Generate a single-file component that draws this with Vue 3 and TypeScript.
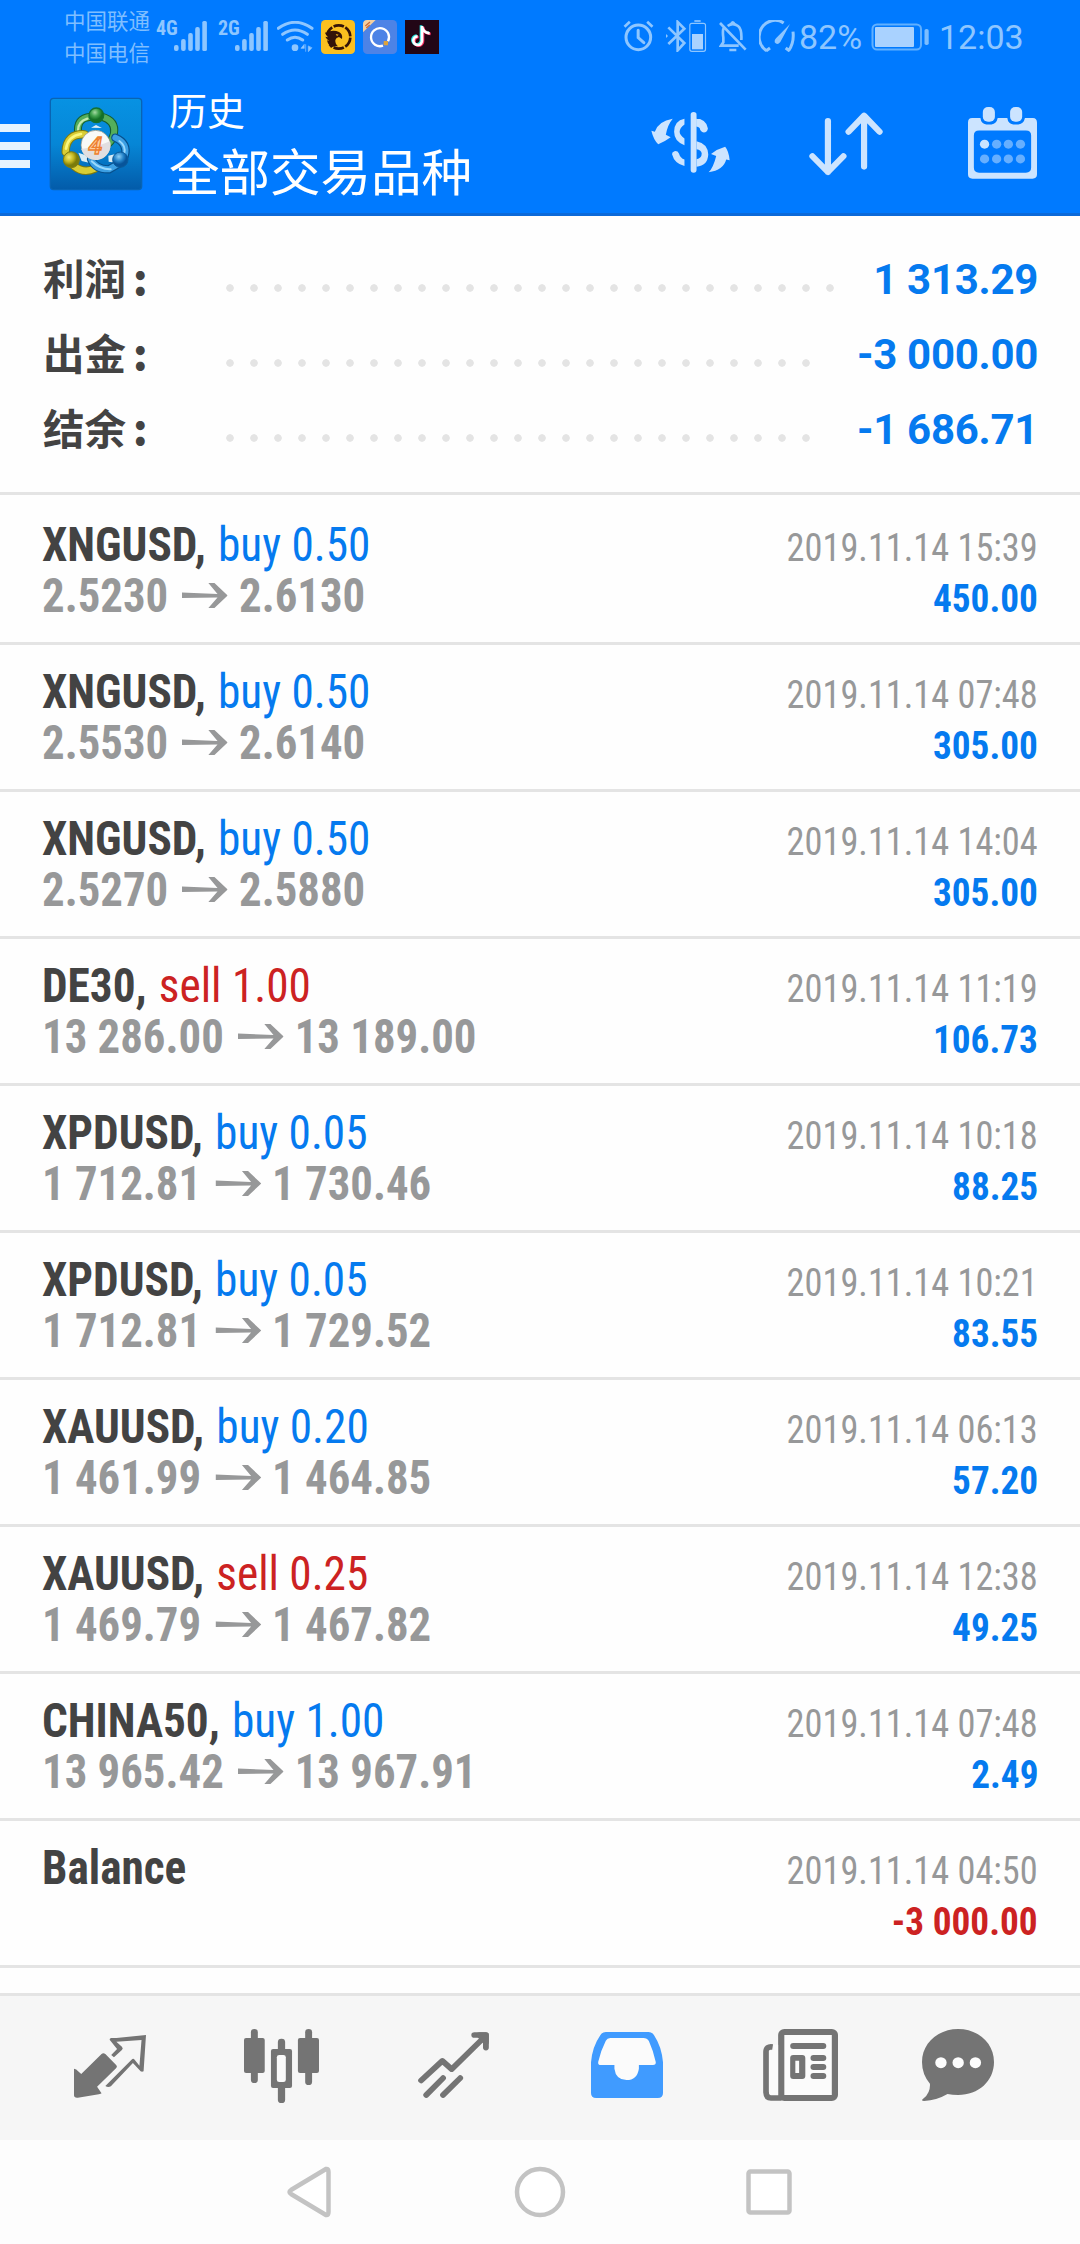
<script setup lang="ts">
interface Deal {
  symbol: string
  side?: 'buy' | 'sell'
  volume?: string
  open?: string
  close?: string
  time: string
  profit: string
}

interface SummaryRow {
  label: string
  dots: number
  value: string
}

const summary: SummaryRow[] = [
  { label: '利润', dots: 26, value: '1 313.29' },
  { label: '出金', dots: 25, value: '-3 000.00' },
  { label: '结余', dots: 25, value: '-1 686.71' },
]

const deals: Deal[] = [
  { symbol: 'XNGUSD', side: 'buy', volume: '0.50', open: '2.5230', close: '2.6130', time: '2019.11.14 15:39', profit: '450.00' },
  { symbol: 'XNGUSD', side: 'buy', volume: '0.50', open: '2.5530', close: '2.6140', time: '2019.11.14 07:48', profit: '305.00' },
  { symbol: 'XNGUSD', side: 'buy', volume: '0.50', open: '2.5270', close: '2.5880', time: '2019.11.14 14:04', profit: '305.00' },
  { symbol: 'DE30', side: 'sell', volume: '1.00', open: '13 286.00', close: '13 189.00', time: '2019.11.14 11:19', profit: '106.73' },
  { symbol: 'XPDUSD', side: 'buy', volume: '0.05', open: '1 712.81', close: '1 730.46', time: '2019.11.14 10:18', profit: '88.25' },
  { symbol: 'XPDUSD', side: 'buy', volume: '0.05', open: '1 712.81', close: '1 729.52', time: '2019.11.14 10:21', profit: '83.55' },
  { symbol: 'XAUUSD', side: 'buy', volume: '0.20', open: '1 461.99', close: '1 464.85', time: '2019.11.14 06:13', profit: '57.20' },
  { symbol: 'XAUUSD', side: 'sell', volume: '0.25', open: '1 469.79', close: '1 467.82', time: '2019.11.14 12:38', profit: '49.25' },
  { symbol: 'CHINA50', side: 'buy', volume: '1.00', open: '13 965.42', close: '13 967.91', time: '2019.11.14 07:48', profit: '2.49' },
  { symbol: 'Balance', time: '2019.11.14 04:50', profit: '-3 000.00' },
]
</script>

<template>
  <div class="screen">
    <header class="top">
      <div class="status">
        <div class="carriers"><span>中国联通</span><span>中国电信</span></div>
        <span class="net n4">4G</span>
        <svg class="bars b1" width="33" height="30" viewBox="0 0 33 30" fill="#8ec6ff">
          <rect x="0" y="24" width="4.6" height="6" rx="2" /><rect x="7.1" y="18" width="4.6" height="12" rx="2" /><rect x="14.2" y="12" width="4.6" height="18" rx="2" /><rect x="21.2" y="6" width="4.6" height="24" rx="2" /><rect x="28.3" y="0" width="4.6" height="30" rx="1.6" />
        </svg>
        <span class="net n2">2G</span>
        <svg class="bars b2" width="33" height="30" viewBox="0 0 33 30" fill="#8ec6ff">
          <rect x="0" y="24" width="4.6" height="6" rx="2" /><rect x="7.1" y="18" width="4.6" height="12" rx="2" /><rect x="14.2" y="12" width="4.6" height="18" rx="2" /><rect x="21.2" y="6" width="4.6" height="24" rx="2" /><rect x="28.3" y="0" width="4.6" height="30" rx="1.6" />
        </svg>
        <svg class="wifi" width="37" height="32" viewBox="20 32 111 96" fill="none" stroke="#8ec6ff" stroke-width="9" stroke-linecap="round">
          <path d="M24 54Q74 18 125 54M37 72Q74 46 111 72M51 89Q74 72 97 89" />
          <circle cx="74" cy="112" r="10" fill="#8ec6ff" stroke="none" />
          <path d="M101 103l-9 11h9zM106 103v20M114 108v16l10-11z" fill="#8ec6ff" stroke-width="2" />
        </svg>
        <svg class="app a1" width="34" height="34" viewBox="153 30 102 102">
          <rect x="153" y="30" width="102" height="102" rx="13" fill="#fbc01f" />
          <circle cx="206" cy="81" r="35" fill="none" stroke="#351409" stroke-width="8" stroke-dasharray="33 5" stroke-dashoffset="-2" pathLength="228" />
          <path d="M153 66H180V106H160Z" fill="#fbc01f" />
          <path d="M165 68Q190 57 207 66Q219 72 216 87L207 81Q198 82 196 90Q195 101 204 109Q190 107 182 113Q183 106 179 107Q172 99 171 91L178 93Q169 87 166 80L174 82Q168 76 165 68Z" fill="#351409" />
          <path d="M197 72l9 2-5 4z" fill="#fbc01f" />
        </svg>
        <svg class="app a2" width="34" height="34" viewBox="279 30 102 102">
          <rect x="279" y="30" width="102" height="102" rx="13" fill="#4d83e6" />
          <path d="M279 67V43Q279 30 292 30H317Z" fill="#f4d0a0" /><path d="M286 48l14-12M289 54l10-9" stroke="#c96b39" stroke-width="4" />
          <path d="M339 107A27 27 0 1 1 354 94" fill="none" stroke="#fff" stroke-width="7" />
          <rect x="341" y="93" width="13" height="13" rx="2" fill="#dda33c" />
        </svg>
        <svg class="app a3" width="34" height="34" viewBox="405 30 102 102" fill="none" stroke-width="8">
          <path fill="#220616" d="M405 30h102v102H405z" />
          <path d="M456 48V91A13 13 0 1 1 443 79M456 49Q458 67 479 70" stroke="#28e6e0" transform="translate(-3 -2)" />
          <path d="M456 48V91A13 13 0 1 1 443 79M456 49Q458 67 479 70" stroke="#fa3265" transform="translate(3 2)" />
          <path d="M456 48V91A13 13 0 1 1 443 79M456 49Q458 67 479 70" stroke="#fff" />
        </svg>

        <svg class="alarm" width="31" height="32" viewBox="240 60 90 96" fill="none" stroke="#8ec6ff" stroke-width="9">
          <circle cx="284.500" cy="112" r="37" /><path d="M284 91v22l17 15" stroke-linecap="round" /><path d="M243 80l16-15M327 80l-16-15" stroke-width="8" />
        </svg>
        <svg class="bt" width="42" height="32" viewBox="362 60 122 96" fill="none" stroke="#8ec6ff">
          <path d="M370 82l48 47-20 22V66l20 20-48 46" stroke-width="8" /><path d="M363 102l6 6-6 6z" fill="#8ec6ff" stroke="none" />
          <rect x="434.500" y="70" width="47" height="84" rx="6" stroke-width="3.500" /><path d="M448 63h19" stroke-width="5" /><rect x="441" y="102" width="33" height="46" fill="#a9d2ff" stroke="none" />
        </svg>
        <svg class="bell" width="28" height="31" viewBox="520 62 82 93" fill="none" stroke="#8ec6ff" stroke-width="8">
          <path d="M533 83Q529 91 532 112V126L525 136H578M545 77Q560 66 576 77Q588 86 586 119M522 68L599 148M550 149h21" /><path d="M554 72Q560 58 567 72" stroke-width="6" />
        </svg>
        <svg class="gauge" width="37" height="32" viewBox="635 60 107 96" fill="none" stroke="#8ec6ff" stroke-width="9">
          <path d="M707 69A47 49 0 0 0 655 152M735 95Q739 127 722 152M654 153l12-9M725 153l-12-9" /><path d="M726 72L697 126Q688 137 680 127Q678 121 684 115Z" fill="#8ec6ff" stroke="none" />
        </svg>
        <span class="pct">82%</span>
        <svg class="battery" width="58" height="28" viewBox="0 0 58 28">
          <rect x="1.500" y="1.500" width="48.500" height="25" rx="4.500" fill="none" stroke="#61b0ff" stroke-width="2" /><rect x="4" y="4" width="39" height="20" rx="1" fill="#a9d2ff" /><rect x="53.500" y="6" width="4.200" height="16" rx="1.800" fill="#7dbeff" />
        </svg>
        <span class="clock">12:03</span>
      </div>

      <div class="appbar">
        <div class="menu"><i /><i /><i /></div>
        <svg class="logo" width="94" height="94" viewBox="25 21 282 282">
          <defs>
            <linearGradient id="lb" x1="0" y1="0" x2="0" y2="1"><stop offset="0" stop-color="#0792e3" /><stop offset=".5" stop-color="#0686d6" /><stop offset="1" stop-color="#035ba9" /></linearGradient>
            <radialGradient id="lg" cx=".4" cy=".3"><stop offset="0" stop-color="#a4d8a2" /><stop offset=".5" stop-color="#45a652" /><stop offset="1" stop-color="#147126" /></radialGradient>
            <radialGradient id="ly" cx=".35" cy=".35"><stop offset="0" stop-color="#f4ed73" /><stop offset=".6" stop-color="#c2b520" /><stop offset="1" stop-color="#7b7b0a" /></radialGradient>
            <radialGradient id="lc" cx=".4" cy=".3"><stop offset="0" stop-color="#8fd0f6" /><stop offset=".6" stop-color="#2584ca" /><stop offset="1" stop-color="#07549a" /></radialGradient>
          </defs>
          <rect x="29" y="25" width="274" height="274" rx="10" fill="url(#lb)" stroke="#0964b3" stroke-width="4" />
          <path d="M113 188L123 213 145 218 160 204ZM203 197L225 192 225 218 204 215ZM151 113L166 105 184 114Z" fill="#d9edf6" />
          <g fill="none" stroke-linecap="round">
            <path d="M113 132Q105 84 150 80L183 80Q226 92 220 130Q217 148 204 160" stroke="#155e31" stroke-width="24" />
            <path d="M113 132Q105 84 150 80L183 80Q226 92 220 130Q217 148 204 160" stroke="#54ae5b" stroke-width="18" />
            <path d="M112 122Q112 94 140 86" stroke="#c4e8ae" stroke-width="7" />
            <path d="M132 133Q76 130 75 186M100 228Q129 252 162 236" stroke="#817a0b" stroke-width="25" />
            <path d="M132 133Q76 130 75 186M100 228Q129 252 162 236" stroke="#d9cd34" stroke-width="19" />
            <path d="M76 176Q82 138 121 132" stroke="#fbf77d" stroke-width="8" />
            <path d="M151 207Q164 239 205 238L236 220M224 143Q263 160 252 198" stroke="#07508d" stroke-width="25" />
            <path d="M151 207Q164 239 205 238L236 220M224 143Q263 160 252 198" stroke="#3c9fe3" stroke-width="18" />
            <path d="M153 214Q179 239 210 238M236 153Q256 167 251 190" stroke="#9ad9fd" stroke-width="6" />
          </g>
          <circle cx="167" cy="76" r="22" fill="url(#lg)" stroke="#147032" stroke-width="4" />
          <circle cx="92" cy="209" r="24" fill="url(#ly)" stroke="#817c10" stroke-width="3" />
          <circle cx="239" cy="209" r="23" fill="url(#lc)" stroke="#0b5c9c" stroke-width="3" />
          <circle cx="165" cy="165" r="44" fill="#f8f9f7" stroke="#8e8c7b" stroke-width="2" />
          <path d="M122 177Q166 172 208 154A44 44 0 0 1 122 177Z" fill="#e2dfe0" />
          <text x="164" y="191" text-anchor="middle" font-family="Roboto, sans-serif" font-size="74" font-weight="700" font-style="italic" fill="#ffcf9e" stroke="#ee7f2e" stroke-width="4">4</text>
        </svg>
        <div class="titles"><span class="t1">历史</span><span class="t2">全部交易品种</span></div>
        <svg class="sync" width="79" height="61" viewBox="321 336 229 182" preserveAspectRatio="none" fill="#cce4ff">
          <path d="M322 392L332 395Q342 363 384 356Q369 374 364 404L378 411Q361 424 342 432Q329 421 322 392Z" />
          <path d="M549 480L539 478Q531 510 488 516Q502 501 510 467L495 461Q515 446 536 440Q546 452 549 480Z" />
          <rect x="436" y="336" width="17" height="181" rx="8.500" />
          <path d="M418 356V373Q404 383 404 395Q404 405 418 415V435Q388 424 388 395Q388 362 418 356ZM389 453Q398 451 402 460Q406 474 418 478V497Q389 490 382 462Q381 456 389 453Z" />
          <path d="M448 354Q482 357 486 385Q484 397 474 397Q464 396 462 384Q458 380 452 379V354ZM453 423Q486 430 487 463Q485 497 453 499V477Q468 474 468 460Q467 449 453 447Z" />
        </svg>
        <svg class="sort" width="74" height="64" viewBox="781 335 215 191" preserveAspectRatio="none" fill="none" stroke="#cce4ff" stroke-width="18" stroke-linecap="round" stroke-linejoin="round">
          <path d="M836 362V514M791 467L836 514 881 467M941 347V498M896 394L941 346 986 394" />
        </svg>
        <svg class="cal" width="69" height="72" viewBox="1243 320 200 215" preserveAspectRatio="none">
          <path fill="#cce4ff" fill-rule="evenodd" d="M1255 353H1279Q1281 371 1296 372H1311Q1326 370 1329 353H1357Q1359 371 1374 372H1389Q1405 370 1408 353H1431Q1443 353 1443 367V521Q1443 534 1430 534H1256Q1243 534 1243 521V366Q1243 353 1255 353ZM1275 390Q1260 390 1260 405V501Q1260 516 1275 516H1411Q1426 516 1426 501V405Q1426 390 1411 390Z" />
          <g fill="#cce4ff"><rect x="1286" y="320" width="35" height="44" rx="15" /><rect x="1365" y="320" width="35" height="44" rx="15" /></g>
          <g fill="#66afff"><circle cx="1326" cy="431" r="13.500" /><circle cx="1360" cy="431" r="13.500" /><circle cx="1395" cy="431" r="13.500" /><circle cx="1291" cy="475" r="13.500" /><circle cx="1326" cy="475" r="13.500" /><circle cx="1360" cy="475" r="13.500" /><circle cx="1395" cy="475" r="13.500" /></g>
          <circle cx="1291" cy="431" r="13.500" fill="#cce4ff" />
        </svg>
      </div>
    </header>

    <section class="summary">
      <div v-for="row in summary" :key="row.label" class="sum-row">
        <span class="sum-label">{{ row.label }}<b>:</b></span>
        <span class="leader" :style="{ width: row.dots * 24 + 'px' }" />
        <span class="sum-value">{{ row.value }}</span>
      </div>
    </section>

    <main class="deals">
      <article v-for="(d, i) in deals" :key="i" class="deal">
        <div class="left">
          <div class="line"><span class="sym">{{ d.symbol }}<template v-if="d.side">,</template></span><span v-if="d.side" :class="['op', d.side]">{{ d.side }} {{ d.volume }}</span></div>
          <div v-if="d.open" class="line price">
            <span>{{ d.open }}</span>
            <svg width="49" height="25" viewBox="0 0 45 25" preserveAspectRatio="none" fill="#979899"><path d="M0 9.500L35 11 26 0H32L45 12.500 32 25H26L35 14.500 0 15Z" /></svg>
            <span>{{ d.close }}</span>
          </div>
        </div>
        <div class="right">
          <span class="time">{{ d.time }}</span>
          <span :class="['profit', { loss: d.profit.startsWith('-') }]">{{ d.profit }}</span>
        </div>
      </article>
    </main>

    <nav class="tabs">
      <svg width="72" height="63" viewBox="215 225 209 189" preserveAspectRatio="none" fill="#747474">
        <path d="M215 326Q222 327 227 334L236 342L295 282Q300 277 306 282L338 316Q342 321 337 325L282 380L295 400Q294 402 287 403L226 413Q215 414 215 406Z" />
        <path d="M338 234L424 225L417 334Q409 337 405 330L386 309L322 379Q314 384 306 378L382 299Q387 293 391 299L405 317L411 240L338 245L354 260Q359 265 354 270L331 292L323 285L340 267L319 240Q317 235 324 234Z" />
      </svg>
      <svg width="75" height="74" viewBox="709 207 217 222" preserveAspectRatio="none" fill="#747474">
        <rect x="729" y="207" width="20" height="162" rx="10" /><rect x="709" y="234" width="60" height="105" rx="6" />
        <rect x="886" y="207" width="20" height="168" rx="10" /><rect x="865" y="234" width="61" height="105" rx="6" />
        <rect x="807" y="236" width="21" height="193" rx="10" /><rect x="787" y="267" width="61" height="117" rx="6" /><rect x="804" y="285" width="26" height="81" rx="7" fill="#fafafa" />
      </svg>
      <svg width="71" height="66" viewBox="1213 215 207 199" preserveAspectRatio="none" fill="none" stroke="#747474" stroke-width="17" stroke-linecap="round" stroke-linejoin="round">
        <path d="M1222 361L1284 302 1311 327 1405 232M1377 224H1411V262M1237 405L1286 354M1286 405L1336 354" /><path d="M1392 224H1411V246Z" />
      </svg>
      <svg width="72" height="66" viewBox="147 216 209 198" preserveAspectRatio="none">
        <path fill="#409bff" d="M147 307Q151 260 174 226Q180 216 190 216H314Q324 216 330 226Q352 260 356 307V399Q356 414 341 414H162Q147 414 147 399Z" />
        <path fill="#fbfbfb" d="M203 234H299Q310 234 315 243Q327 270 335 306Q336 315 327 315H286V326Q281 360 250 360Q219 359 215 326V315H176Q166 315 168 305Q176 270 190 242Q194 234 203 234Z" />
      </svg>
      <svg width="75" height="72" viewBox="646 207 218 216" preserveAspectRatio="none">
        <rect x="699" y="216" width="156" height="198" rx="9" fill="#fbfbfb" stroke="#747474" stroke-width="18" />
        <path d="M674 261Q655 258 655 276V397Q656 414 669 414H700" fill="none" stroke="#747474" stroke-width="17" /><path d="M663 272V395Q663 405 673 405H690V254H677V270Z" fill="#fafafa" />
        <path d="M734 258H821M793 294H821M793 321H821M793 348H821" stroke="#747474" stroke-width="18" stroke-linecap="round" />
        <path d="M734 285H760Q769 285 769 294V348Q769 357 760 357H734Q725 357 725 348V294Q725 285 734 285ZM740 302V339H751V302Z" fill="#747474" fill-rule="evenodd" />
      </svg>
      <svg width="72" height="72" viewBox="1109 207 209 216" preserveAspectRatio="none" fill="#747474">
        <path d="M1214 207C1273 207 1318 250 1318 306C1318 363 1273 405 1214 405Q1197 405 1183 402Q1152 421 1115 423Q1104 423 1114 415Q1134 398 1132 371Q1109 343 1109 306C1109 250 1155 207 1214 207Z" />
        <g fill="#fdfdfd"><circle cx="1164" cy="308" r="16.500" /><circle cx="1214" cy="308" r="16.500" /><circle cx="1264" cy="308" r="16.500" /></g>
      </svg>
    </nav>

    <footer class="sysnav">
      <svg width="44" height="52" viewBox="0 0 44 52"><path d="M39 3Q41.500 2.500 41.500 6V46Q41.500 49.500 39 49L4 28Q1 26 4 24Z" /></svg>
      <svg width="52" height="52" viewBox="0 0 52 52"><circle cx="26" cy="26" r="23" /></svg>
      <svg width="46" height="46" viewBox="0 0 46 46"><rect x="2.500" y="2.500" width="41" height="41" rx="2" /></svg>
    </footer>
  </div>
</template>

<style>
body {
  margin: 0;
  background: #fff;
}
</style>

<style scoped>
.screen {
  width: 1080px;
  height: 2244px;
  overflow: hidden;
  display: flex;
  flex-direction: column;
  background: #fefefe;
  font-family: Roboto, "Noto Sans CJK SC", sans-serif;
}
svg {
  display: block;
  flex: none;
}
.top {
  height: 213px;
  background: #007aff;
  border-bottom: 3px solid #0c6ad9;
}
.status {
  height: 72px;
  display: flex;
  align-items: flex-start;
  color: #8ec6ff;
}
.carriers {
  display: flex;
  flex-direction: column;
  margin: 4px 0 0 64px;
  width: 92px;
  color: #7fbeff;
  font: 400 21.5px/32px "Noto Sans CJK SC", sans-serif;
  white-space: nowrap;
}
.net {
  width: 17px;
  margin-top: 17px;
  font: 700 20px/22px "Roboto Condensed", Roboto, sans-serif;
  font-stretch: 75%;
  white-space: nowrap;
}
.n2 { margin-left: 11px; }
.bars { margin-top: 21px; }
.b1 { margin-left: 1px; }
.wifi { margin: 21px 0 0 9px; }
.app { margin-top: 20px; }
.a1 { margin-left: 7px; }
.a2, .a3 { margin-left: 8px; }
.alarm { margin: 20px 0 0 184px; }
.bt { margin: 20px 0 0 11px; }
.bell { margin: 21px 0 0 12px; }
.gauge { margin: 20px 0 0 12px; }
.pct, .clock {
  margin-top: 17px;
  font: 400 34px/40px Roboto, sans-serif;
  white-space: nowrap;
}
.pct { margin-left: 3px; width: 72px; }
.clock { margin-left: 10px; }
.battery { margin-top: 23px; }

.appbar {
  height: 141px;
  display: flex;
  align-items: flex-start;
}
.menu {
  width: 30px;
  display: flex;
  flex-direction: column;
  gap: 10px;
  margin-top: 52px;
}
.menu i {
  height: 8px;
  background: #e6f3ff;
}
.logo { margin: 25px 0 0 19px; }
.titles {
  display: flex;
  flex-direction: column;
  width: 320px;
  margin: 9px 0 0 26px;
  color: #fff;
  font-family: "Noto Sans CJK SC", sans-serif;
  font-weight: 400;
  white-space: nowrap;
}
.t1 { font-size: 38px; line-height: 56px; }
.t2 { font-size: 50.500px; line-height: 64px; }
.sync { margin: 40px 0 0 162px; }
.sort { margin: 40px 0 0 79px; }
.cal { margin: 35px 0 0 85px; }

.summary {
  height: 225px;
  padding: 26px 42px 25px;
  border-bottom: 3px solid #e4e4e4;
}
.sum-row {
  height: 75px;
  display: flex;
  align-items: center;
}
.sum-label {
  width: 175px;
  margin: -4px 0 0 1px;
  color: #434343;
  font: 700 41.500px/75px "Noto Sans CJK SC", sans-serif;
}
.sum-label b { margin-left: 7px; }
.leader {
  height: 8px;
  margin-top: 16px;
  background: radial-gradient(circle at center, #e4e4e4 3.400px, transparent 4.100px) 0 0 / 24px 8px repeat-x;
}
.sum-value {
  margin-left: auto;
  color: #057aef;
  font: 700 42px/75px Roboto, sans-serif;
  letter-spacing: -0.3px;
}

.deals {
  padding-top: 3px;
}
.deal {
  box-sizing: border-box;
  height: 147px;
  padding: 21px 42px 0;
  display: flex;
  justify-content: space-between;
  border-bottom: 3px solid #e4e4e4;
  font-family: "Roboto Condensed", Roboto, sans-serif;
  font-stretch: 75%;
  white-space: nowrap;
}
.line {
  height: 51px;
  display: flex;
  font-size: 48px;
  line-height: 51px;
  transform: scaleX(0.943);
  transform-origin: left;
}
.sym { color: #434343; font-weight: 700; }
.op { margin-left: 13px; }
.buy { color: #057aef; }
.sell { color: #cc2222; }
.price {
  color: #979899;
  font-weight: 700;
  transform: scaleX(0.933);
}
.price svg { margin: 13px 12px 0 15px; }
.right {
  display: flex;
  flex-direction: column;
  align-items: flex-end;
  padding-top: 4px;
  font-size: 39px;
  line-height: 51px;
}
.time {
  color: #979899;
  transform: scaleX(0.931);
  transform-origin: right;
}
.profit {
  color: #057aef;
  font-weight: 700;
  transform: scaleX(0.955);
  transform-origin: right;
}
.loss { color: #cc2222; }

.tabs {
  margin-top: 25px;
  height: 144px;
  border-top: 3px solid #e4e4e4;
  background: #f6f6f6;
  display: flex;
  align-items: flex-start;
}
.tabs svg:nth-child(1) { margin: 39px 0 0 74px; }
.tabs svg:nth-child(2) { margin: 33px 0 0 98px; }
.tabs svg:nth-child(3) { margin: 36px 0 0 99px; }
.tabs svg:nth-child(4) { margin: 36px 0 0 102px; }
.tabs svg:nth-child(5) { margin: 33px 0 0 100px; }
.tabs svg:nth-child(6) { margin: 33px 0 0 84px; }

.sysnav {
  flex: 1;
  background: #fdfdfd;
  display: flex;
  align-items: center;
}
.sysnav svg {
  fill: #fff;
  stroke: #c3c3c3;
  stroke-width: 4.500px;
}
.sysnav svg:nth-child(1) { margin-left: 287px; }
.sysnav svg:nth-child(2) { margin-left: 183px; }
.sysnav svg:nth-child(3) { margin-left: 180px; }
</style>
